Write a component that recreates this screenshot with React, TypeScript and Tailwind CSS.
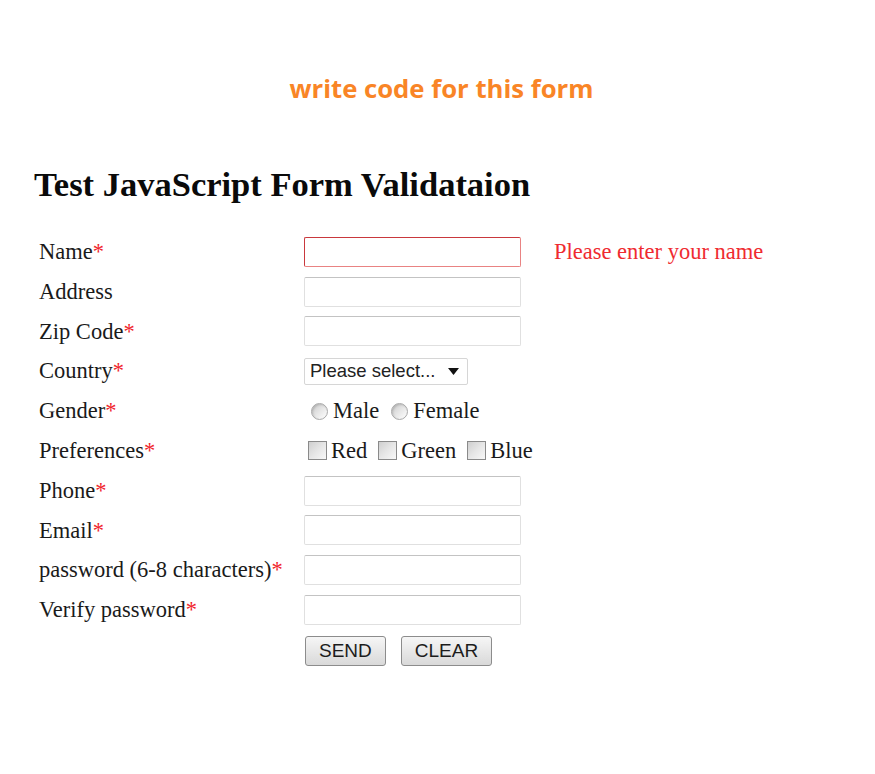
import { useState } from 'react'

const serif = { fontFamily: '"Liberation Serif", "Times New Roman", serif' }

function Star() {
  return <span className="text-[#f0242c]">*</span>
}

function TextInput({ error = false }: { error?: boolean }) {
  return (
    <input
      type="text"
      className={`w-[217px] h-[30px] rounded-[2px] border bg-white outline-none ${
        error
          ? 'border-[#e98383] border-t-[#c9383d] border-l-[#c9383d]'
          : 'border-[#e0e0e0] border-t-[#c3c3c3]'
      }`}
    />
  )
}

function Radio({ label }: { label: string }) {
  return (
    <label className="flex items-center">
      <span className="w-[17px] h-[17px] rounded-full border border-[#a8a8a8] bg-gradient-to-br from-[#c9c9c9] via-[#e6e6e6] to-[#ffffff] shadow-[inset_1px_1px_2px_rgba(0,0,0,0.15)]" />
      <span className="ml-[5px]">{label}</span>
    </label>
  )
}

function Check({ label }: { label: string }) {
  return (
    <label className="flex items-center">
      <span className="w-[19px] h-[19px] border border-[#8a8a8a] bg-gradient-to-br from-[#cfcfcf] via-[#e6e6e6] to-[#f8f8f8]" />
      <span className="ml-[4px]">{label}</span>
    </label>
  )
}

function Button({ children }: { children: string }) {
  return (
    <button
      type="button"
      className="h-[30px] px-[13px] rounded-[3px] border border-[#8c8c8c] bg-gradient-to-b from-[#f6f6f6] to-[#d9d9d9] text-[19px] leading-none text-[#1c1c1c]"
      style={{ fontFamily: '"Liberation Sans", Arial, sans-serif' }}
    >
      {children}
    </button>
  )
}

export default function App() {
  const [country] = useState('Please select...')

  const rows: { label: string; req: boolean; field: React.ReactNode; extra?: React.ReactNode }[] = [
    {
      label: 'Name',
      req: true,
      field: <TextInput error />,
      extra: <span className="ml-[33px] text-[#ef2b30]">Please enter your name</span>,
    },
    { label: 'Address', req: false, field: <TextInput /> },
    { label: 'Zip Code', req: true, field: <TextInput /> },
    {
      label: 'Country',
      req: true,
      field: (
        <div
          className="w-[164px] h-[27px] border border-[#d6d6d6] bg-white rounded-[2px] flex items-center justify-between pl-[5px] pr-[8px] text-[18.5px] text-[#222]"
          style={{ fontFamily: '"Liberation Sans", Arial, sans-serif' }}
        >
          <span>{country}</span>
          <svg width="11" height="7" viewBox="0 0 11 7">
            <path d="M0 0h11L5.5 7z" fill="#111" />
          </svg>
        </div>
      ),
    },
    {
      label: 'Gender',
      req: true,
      field: (
        <div className="flex items-center gap-[12px] pl-[7px]">
          <Radio label="Male" />
          <Radio label="Female" />
        </div>
      ),
    },
    {
      label: 'Preferences',
      req: true,
      field: (
        <div className="flex items-center gap-[11px] pl-[4px]">
          <Check label="Red" />
          <Check label="Green" />
          <Check label="Blue" />
        </div>
      ),
    },
    { label: 'Phone', req: true, field: <TextInput /> },
    { label: 'Email', req: true, field: <TextInput /> },
    { label: 'password (6-8 characters)', req: true, field: <TextInput /> },
    { label: 'Verify password', req: true, field: <TextInput /> },
  ]

  return (
    <div className="w-[875px] h-[774px] bg-white overflow-hidden">
      <div
        className="pt-[70px] text-center text-[#f98526] text-[25.7px] font-bold leading-[38px] pl-[8px]"
        style={{ fontFamily: '"Open Sans", "Noto Sans", sans-serif' }}
      >
        write code for this form
      </div>

      <div className="pl-[34px] pt-[56px]" style={serif}>
        <h1 className="text-[34.5px] font-bold leading-[40px] text-[#0a0a0a]">Test JavaScript Form Validataion</h1>

        <div className="mt-[28px] text-[22.5px] text-[#1a1a1a]">
          {rows.map((r) => (
            <div key={r.label} className="flex items-center h-[39.8px]">
              <div className="w-[270px] pl-[5px]">
                {r.label}
                {r.req && <Star />}
              </div>
              {r.field}
              {r.extra}
            </div>
          ))}
          <div className="flex items-center h-[42px] pl-[271px] gap-[15px]">
            <Button>SEND</Button>
            <Button>CLEAR</Button>
          </div>
        </div>
      </div>
    </div>
  )
}
